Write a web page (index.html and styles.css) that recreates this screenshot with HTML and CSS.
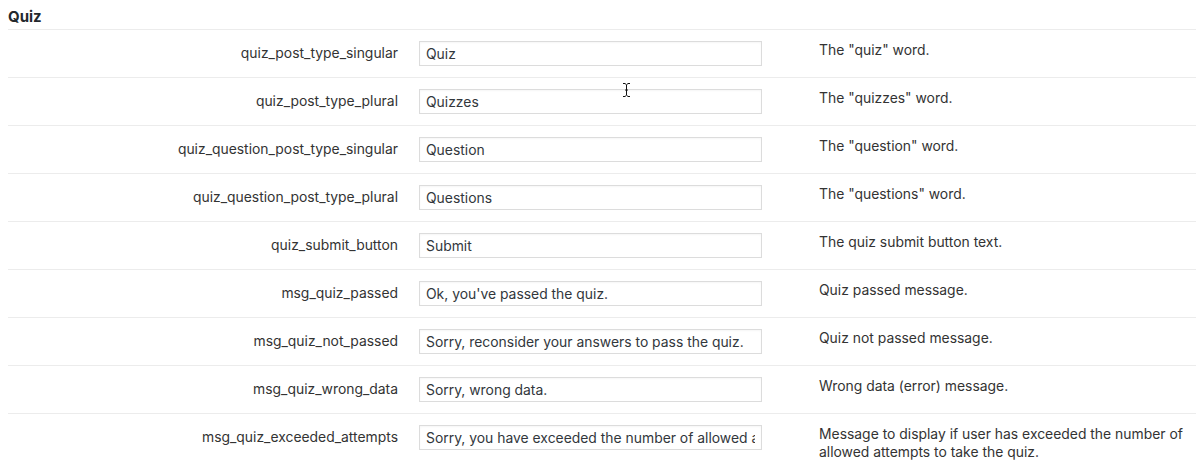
FILE: index.html
```html
<!DOCTYPE html>
<html>
<head>
<meta charset="utf-8">
<link rel="stylesheet" href="styles.css">
</head>
<body>
<h2 class="section-title">Quiz</h2>
<div class="settings">
  <div class="row">
    <label class="label">quiz_post_type_singular</label>
    <div class="field"><input class="text" type="text" value="Quiz"></div>
    <div class="desc">The "quiz" word.</div>
  </div>
  <div class="row">
    <label class="label">quiz_post_type_plural</label>
    <div class="field"><input class="text" type="text" value="Quizzes"></div>
    <div class="desc">The "quizzes" word.</div>
  </div>
  <div class="row">
    <label class="label">quiz_question_post_type_singular</label>
    <div class="field"><input class="text" type="text" value="Question"></div>
    <div class="desc">The "question" word.</div>
  </div>
  <div class="row">
    <label class="label">quiz_question_post_type_plural</label>
    <div class="field"><input class="text" type="text" value="Questions"></div>
    <div class="desc">The "questions" word.</div>
  </div>
  <div class="row">
    <label class="label">quiz_submit_button</label>
    <div class="field"><input class="text" type="text" value="Submit"></div>
    <div class="desc">The quiz submit button text.</div>
  </div>
  <div class="row">
    <label class="label">msg_quiz_passed</label>
    <div class="field"><input class="text" type="text" value="Ok, you've passed the quiz."></div>
    <div class="desc">Quiz passed message.</div>
  </div>
  <div class="row">
    <label class="label">msg_quiz_not_passed</label>
    <div class="field"><input class="text" type="text" value="Sorry, reconsider your answers to pass the quiz."></div>
    <div class="desc">Quiz not passed message.</div>
  </div>
  <div class="row">
    <label class="label">msg_quiz_wrong_data</label>
    <div class="field"><input class="text" type="text" value="Sorry, wrong data."></div>
    <div class="desc">Wrong data (error) message.</div>
  </div>
  <div class="row row-last">
    <label class="label">msg_quiz_exceeded_attempts</label>
    <div class="field"><input class="text" type="text" value="Sorry, you have exceeded the number of allowed attempts to take the quiz."></div>
    <div class="desc">Message to display if user has exceeded the number of allowed attempts to take the quiz.</div>
  </div>
</div>
<svg class="cursor" width="9" height="16" viewBox="0 0 9 16" aria-hidden="true">
  <path d="M1 1.5 H3 L4.5 2.8 L6 1.5 H8 M4.5 2.8 V13.2 M1 14.5 H3 L4.5 13.2 L6 14.5 H8 M3 8 H6" fill="none" stroke="#fff" stroke-width="2.6"/>
  <path d="M1 1.5 H3 L4.5 2.8 L6 1.5 H8 M4.5 2.8 V13.2 M1 14.5 H3 L4.5 13.2 L6 14.5 H8 M3 8 H6" fill="none" stroke="#111" stroke-width="1"/>
</svg>
</body>
</html>
```
FILE: styles.css
```css
html, body {
  margin: 0;
  padding: 0;
  background: #fff;
}
body {
  padding: 0 0 0 8px;
  font-family: Inter, "Liberation Sans", Arial, sans-serif;
  font-size: 13.9px;
  color: #333;
  position: relative;
  overflow: hidden;
}
.section-title {
  margin: 0;
  padding: 9px 0 0 0;
  height: 20px;
  font-size: 15px;
  font-weight: 700;
  color: #23282d;
  line-height: 16px;
}
.settings {
  border-top: 1px solid #ececec;
}
.row {
  display: grid;
  grid-template-columns: 390px 392px 402px;
  border-bottom: 1px solid #ececec;
  padding: 11px 0 11px 0;
  min-height: 25px;
}
.row-last {
  padding-bottom: 24px;
}
.label {
  text-align: right;
  align-self: start;
  line-height: 25px;
  white-space: nowrap;
}
.field {
  padding-left: 21px;
}
.text {
  display: block;
  box-sizing: border-box;
  width: 343px;
  height: 25px;
  margin: 0;
  padding: 0 6px;
  border: 1px solid #dcdcdc;
  border-radius: 0;
  font-family: Inter, "Liberation Sans", Arial, sans-serif;
  font-size: 13.9px;
  color: #32373c;
  background: #fff;
  box-shadow: inset 0 1px 2px rgba(0,0,0,0.04);
}
.desc {
  padding-left: 29px;
  line-height: 18px;
  color: #333;
}
.cursor {
  position: absolute;
  left: 622px;
  top: 82px;
}
```
